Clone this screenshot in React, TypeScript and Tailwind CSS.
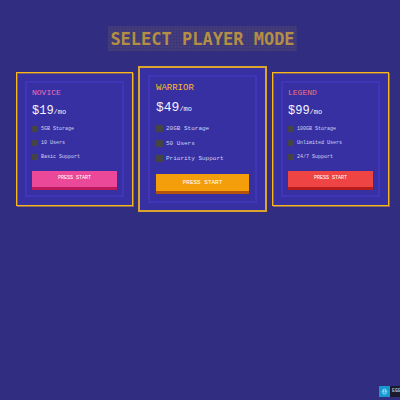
import React from "react";
import { clsx } from "clsx";

type Plan = {
  name: string;
  price: string;
  features: string[];
  nameClass: string;
  buttonClass: string;
  featured?: boolean;
};

const plans: Plan[] = [
  {
    name: "NOVICE",
    price: "$19",
    features: ["5GB Storage", "10 Users", "Basic Support"],
    nameClass: "text-[#f070b8]",
    buttonClass: "bg-[#ec4899] border-[#be185d]",
  },
  {
    name: "WARRIOR",
    price: "$49",
    features: ["20GB Storage", "50 Users", "Priority Support"],
    nameClass: "text-[#fbbf24]",
    buttonClass: "bg-[#f59e0b] border-[#b45309]",
    featured: true,
  },
  {
    name: "LEGEND",
    price: "$99",
    features: ["100GB Storage", "Unlimited Users", "24/7 Support"],
    nameClass: "text-[#f87171]",
    buttonClass: "bg-[#ef4444] border-[#b91c1c]",
  },
];

function PlanCard({ plan }: { plan: Plan }) {
  const big = plan.featured;
  return (
    <article
      className={clsx(
        "bg-[#3730a3]",
        big
          ? "border-2 border-[#dba42c] px-2 py-[7px]"
          : "border border-[#fbb81c] p-2 shadow-[1px_1px_0_#8f6d52,inset_1px_1px_0_#806360]",
      )}
    >
      <div
        className={clsx(
          "border-2 border-[#4034b9]",
          big ? "px-[6px] pt-[5px] pb-[7px]" : "px-[5px] pt-1 pb-[5px]",
        )}
      >
        <h2 className={clsx("leading-[12px]", plan.nameClass, big ? "text-[9px]" : "text-[8px]")}>
          {plan.name}
        </h2>
        <p
          className={clsx(
            "text-[#f4f4ff]",
            big ? "mt-[5px] text-[13px] leading-[18px]" : "mt-1 text-[12px] leading-[16px]",
          )}
        >
          {plan.price}
          <span className="text-[7px]">/mo</span>
        </p>
        <ul
          className={clsx(
            "text-[#d0d3f2]",
            big ? "mt-[3px] text-[6px] leading-[15px]" : "mt-[2px] text-[5px] leading-[14px]",
          )}
        >
          {plan.features.map((feature) => (
            <li key={feature} className="flex items-center gap-[3px]">
              <span className={clsx("bg-[#444444]", big ? "size-[7px]" : "size-[6px]")} />
              {feature}
            </li>
          ))}
        </ul>
        <button
          type="button"
          className={clsx(
            "block w-full border-b-[3px] text-white",
            plan.buttonClass,
            big ? "mt-2 h-[20px] text-[6px]" : "mt-[7px] h-[19px] text-[5px]",
          )}
        >
          PRESS START
        </button>
      </div>
    </article>
  );
}

export default function App() {
  return (
    <main className="min-h-screen bg-[#312e81] pt-[26px] pr-[11px] pl-4 font-['Liberation_Mono',monospace]">
      <h1 className="mx-auto w-fit bg-[#443d77] bg-[repeating-linear-gradient(0deg,#0000_0_2px,#312e8155_2px_3px),repeating-linear-gradient(90deg,#0000_0_2px,#312e8155_2px_3px)] px-[2px] pt-px text-[17px] leading-[24px] font-bold text-[#b48f43] font-['DejaVu_Sans_Mono',monospace]">
        SELECT PLAYER MODE
      </h1>
      <section className="mt-[15px] grid grid-cols-[117fr_129fr_117fr] items-center gap-[5px]">
        {plans.map((plan) => (
          <PlanCard key={plan.name} plan={plan} />
        ))}
      </section>
      <a
        href="#ege"
        className="fixed right-0 bottom-[3px] flex h-[11px] w-[21px] items-center overflow-hidden bg-[#1c1a2e] text-[5px] text-[#b9b9c4]"
      >
        <span className="flex size-[11px] shrink-0 items-center justify-center bg-[#1799cf]">
          <svg viewBox="0 0 12 12" className="size-[9px]" aria-hidden="true">
            <path d="M6 1 L10.5 6.5 L6 11 L1.5 6.5 Z" fill="#8ad6f2" />
            <path d="M6 1 V7 M1.5 6.5 L6 7.5 L10.5 6.5 M6 7.5 V11" stroke="#1799cf" strokeWidth="0.8" fill="none" />
          </svg>
        </span>
        <span className="pt-px pl-[2px] font-bold">EGE</span>
      </a>
    </main>
  );
}
